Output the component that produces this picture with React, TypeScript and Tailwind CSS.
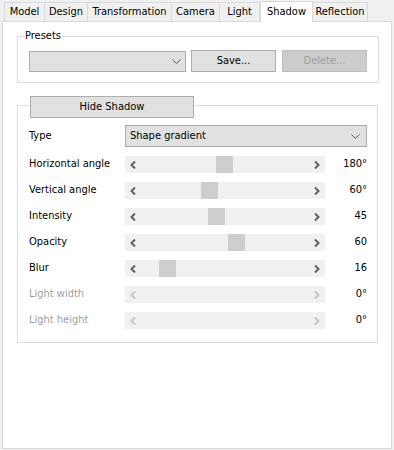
import React from 'react'

const tabs = [
    { name: 'Model', w: 41 },
    { name: 'Design', w: 44 },
    { name: 'Transformation', w: 85 },
    { name: 'Camera', w: 49 },
    { name: 'Light', w: 41 },
    { name: 'Shadow', w: 53, active: true },
    { name: 'Reflection', w: 56 },
];

interface SliderRow {
    label: string;
    value: string;
    thumb?: number;
    disabled?: boolean;
}

const rows: SliderRow[] = [
    { label: 'Horizontal angle', value: '180°', thumb: 91 },
    { label: 'Vertical angle', value: '60°', thumb: 76 },
    { label: 'Intensity', value: '45', thumb: 83 },
    { label: 'Opacity', value: '60', thumb: 103 },
    { label: 'Blur', value: '16', thumb: 34 },
    { label: 'Light width', value: '0°', disabled: true },
    { label: 'Light height', value: '0°', disabled: true },
];

const Chevron: React.FC<{ dir: 'left' | 'right' | 'down'; color: string }> = ({ dir, color }) => {
    if (dir === 'down') {
        return (
            <svg width="9" height="5" viewBox="0 0 9 5">
                <path d="M0.5 0.5 L4.5 4.5 L8.5 0.5" fill="none" stroke={color} strokeWidth="1" />
            </svg>
        );
    }
    return (
        <svg width="6" height="8" viewBox="0 0 6 8">
            <path
                d={dir === 'left' ? 'M5 0.5 L1.5 4 L5 7.5' : 'M1 0.5 L4.5 4 L1 7.5'}
                fill="none"
                stroke={color}
                strokeWidth="2"
            />
        </svg>
    );
};

const Slider: React.FC<{ thumb?: number; disabled?: boolean }> = ({ thumb, disabled }) => {
    const arrow = disabled ? '#c4c4c4' : '#606060';
    return (
        <div className="relative w-[200px] h-[17px] bg-[#f0f0f0] flex items-center justify-between px-[5px]">
            <Chevron dir="left" color={arrow} />
            {thumb !== undefined && (
                <div className="absolute top-0 h-[17px] w-[17px] bg-[#cdcdcd]" style={{ left: thumb }} />
            )}
            <Chevron dir="right" color={arrow} />
        </div>
    );
};

export default function App() {
    return (
        <div
            className="w-[394px] h-[450px] bg-[#f0f0f0] text-[11px] text-black"
            style={{ fontFamily: '"DejaVu Sans Condensed", "Liberation Sans", Arial, sans-serif' }}
        >
            {/* tab strip */}
            <div className="flex items-end h-[21px] pl-[4px]">
                {tabs.map((t) =>
                    t.active ? (
                        <div
                            key={t.name}
                            className="h-[21px] -mb-px z-10 bg-white border border-b-0 border-[#d9d9d9] flex items-start justify-center pt-[2px]"
                            style={{ width: t.w }}
                        >
                            {t.name}
                        </div>
                    ) : (
                        <div
                            key={t.name}
                            className="h-[19px] bg-[#f0f0f0] border border-b-0 border-[#d9d9d9] -ml-px first:ml-0 flex items-center justify-center"
                            style={{ width: t.w }}
                        >
                            {t.name}
                        </div>
                    )
                )}
            </div>

            {/* tab page */}
            <div className="mx-[2px] h-[428px] bg-white border border-[#d9d9d9] pt-[14px] pl-[14px]">
                {/* Presets group */}
                <div className="relative w-[362px] h-[47px] border border-[#dcdcdc] flex items-start pl-[11px] pt-[13px]">
                    <span className="absolute -top-[8px] left-[6px] bg-white px-[1px] leading-[14px]">Presets</span>
                    <div className="mt-px w-[157px] h-[21px] bg-[#e1e1e1] border border-[#adadad] flex items-center justify-end pr-[4px]">
                        <Chevron dir="down" color="#555" />
                    </div>
                    <button className="ml-[5px] w-[85px] h-[22px] bg-[#e1e1e1] border border-[#adadad] flex items-center justify-center">
                        Save...
                    </button>
                    <button className="ml-[6px] w-[85px] h-[22px] bg-[#cccccc] border border-[#bfbfbf] text-[#a0a0a0] flex items-center justify-center">
                        Delete...
                    </button>
                </div>

                {/* Shadow group */}
                <div className="relative mt-[22px] w-[361px] h-[238px] border border-[#dcdcdc] pl-[11px] pr-[10px] pt-[19px]">
                    <button className="absolute -top-[10px] left-[12px] w-[164px] h-[22px] bg-[#e1e1e1] border border-[#adadad] flex items-center justify-center">
                        Hide Shadow
                    </button>

                    <div className="flex items-center h-[22px]">
                        <span className="w-[96px]">Type</span>
                        <div className="flex-1 h-[22px] bg-[#e1e1e1] border border-[#adadad] flex items-center justify-between pl-[4px] pr-[6px]">
                            <span>Shape gradient</span>
                            <Chevron dir="down" color="#555" />
                        </div>
                    </div>

                    <div className="mt-[9px] flex flex-col gap-[9px]">
                        {rows.map((r) => (
                            <div key={r.label} className="flex items-center h-[17px]">
                                <span className={`w-[96px] ${r.disabled ? 'text-[#a0a0a0]' : ''}`}>{r.label}</span>
                                <Slider thumb={r.thumb} disabled={r.disabled} />
                                <span className="flex-1 text-right">{r.value}</span>
                            </div>
                        ))}
                    </div>
                </div>
            </div>
        </div>
    );
}
